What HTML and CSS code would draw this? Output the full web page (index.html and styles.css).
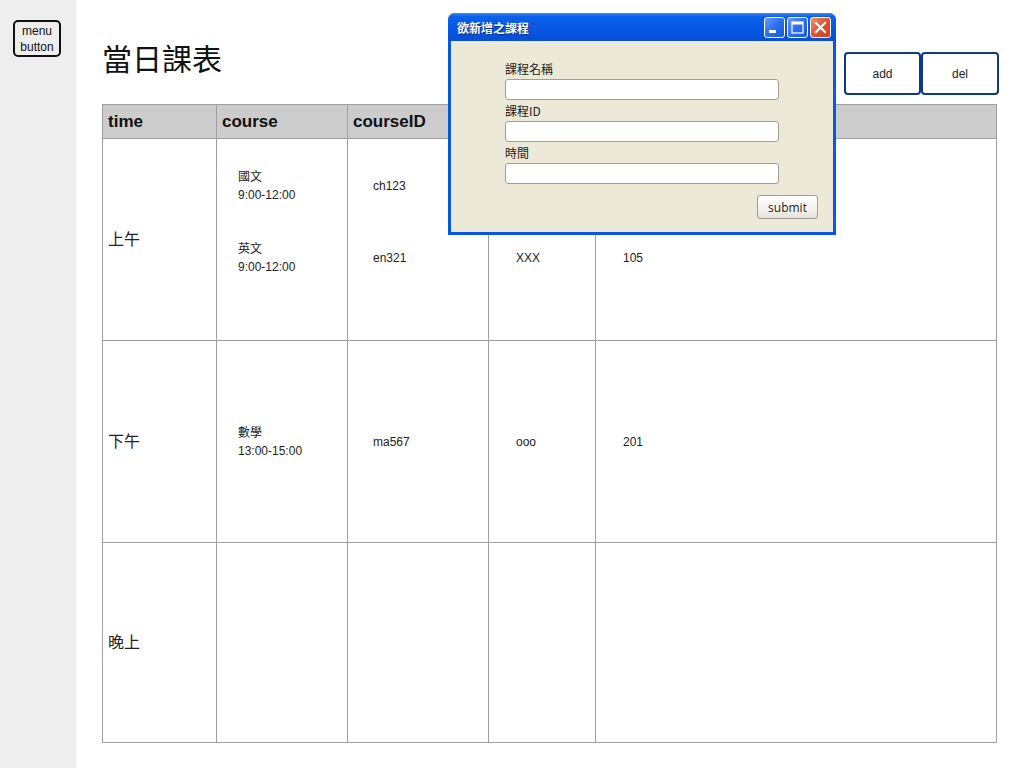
FILE: index.html
```html
<!DOCTYPE html>
<html lang="zh-Hant">
<head>
<meta charset="utf-8">
<title>當日課表</title>
<link rel="stylesheet" href="styles.css">
</head>
<body>
<div class="app">
  <aside class="sidebar">
    <button class="menu-btn">menu<br>button</button>
  </aside>
  <main class="main">
    <div class="topbar">
      <h1 class="title">當日課表</h1>
      <div class="actions">
        <button class="act-btn">add</button>
        <button class="act-btn del">del</button>
      </div>
    </div>
    <table class="schedule">
      <colgroup>
        <col class="c-time"><col class="c-course"><col class="c-id"><col class="c-teacher"><col class="c-room">
      </colgroup>
      <thead>
        <tr><th>time</th><th>course</th><th>courseID</th><th></th><th></th></tr>
      </thead>
      <tbody>
        <tr>
          <td class="time">上午</td>
          <td class="p-course"><div class="entries am">
            <div class="entry two">國文<br>9:00-12:00</div>
            <div class="entry two">英文<br>9:00-12:00</div>
          </div></td>
          <td class="p-id"><div class="entries am">
            <div class="entry">ch123</div>
            <div class="entry">en321</div>
          </div></td>
          <td class="p-other"><div class="entries am">
            <div class="entry"></div>
            <div class="entry">XXX</div>
          </div></td>
          <td class="p-other"><div class="entries am">
            <div class="entry"></div>
            <div class="entry">105</div>
          </div></td>
        </tr>
        <tr>
          <td class="time">下午</td>
          <td class="p-course"><div class="entries">
            <div class="entry two">數學<br>13:00-15:00</div>
          </div></td>
          <td class="p-id"><div class="entries"><div class="entry">ma567</div></div></td>
          <td class="p-other"><div class="entries"><div class="entry">ooo</div></div></td>
          <td class="p-other"><div class="entries"><div class="entry">201</div></div></td>
        </tr>
        <tr class="last">
          <td class="time">晚上</td>
          <td></td><td></td><td></td><td></td>
        </tr>
      </tbody>
    </table>
  </main>
</div>

<div class="dialog">
  <div class="dlg-title">
    <span class="dlg-caption">欲新增之課程</span>
    <div class="dlg-ctrls">
      <span class="ctrl"><svg width="21" height="21" viewBox="0 0 21 21"><rect x="5" y="13" width="7" height="3" fill="#fff"/></svg></span>
      <span class="ctrl"><svg width="21" height="21" viewBox="0 0 21 21"><rect x="5" y="5" width="11" height="11" fill="none" stroke="#fff" stroke-width="1.2"/><rect x="5" y="5" width="11" height="2.5" fill="#fff"/></svg></span>
      <span class="ctrl close"><svg width="21" height="21" viewBox="0 0 21 21"><path d="M6 6 L15 15 M15 6 L6 15" stroke="#fff" stroke-width="2.2" stroke-linecap="square"/></svg></span>
    </div>
  </div>
  <div class="dlg-body">
    <form class="dlg-form">
      <label class="fld"><span class="lbl">課程名稱</span><input class="inp" type="text"></label>
      <label class="fld"><span class="lbl">課程ID</span><input class="inp" type="text"></label>
      <label class="fld"><span class="lbl">時間</span><input class="inp" type="text"></label>
    </form>
    <div class="dlg-foot"><button class="submit" type="button">submit</button></div>
  </div>
</div>
</body>
</html>
```

FILE: styles.css
```css
* { box-sizing: border-box; }
html, body { margin: 0; padding: 0; }
body {
  font-family: "Liberation Sans", Arial, "Noto Sans CJK TC", sans-serif;
  color: #222;
  background: #fff;
}
.app {
  display: flex;
  min-height: 768px;
}
.sidebar {
  width: 76px;
  flex: none;
  background: #eeeeee;
  padding: 20px 0 0 13px;
}
.menu-btn {
  width: 48px;
  height: 37px;
  border: 2px solid #111;
  border-radius: 5px;
  background: transparent;
  font-family: "Liberation Sans", Arial, sans-serif;
  font-size: 12px;
  line-height: 16px;
  color: #111;
  padding: 0;
  display: block;
}
.main {
  flex: 1;
  padding: 36px 28px 0 26px;
}
.topbar {
  display: flex;
  justify-content: space-between;
  align-items: flex-start;
  margin-bottom: 9px;
}
.title {
  margin: 0;
  font-size: 30px;
  line-height: 42px;
  font-weight: normal;
  font-family: "Noto Sans CJK TC", sans-serif;
  color: #111;
}
.actions {
  display: flex;
  margin-top: 16px;
  margin-right: -2px;
}
.act-btn {
  width: 77px;
  height: 43px;
  border: 2px solid #0b3a87;
  border-radius: 4px;
  background: #fff;
  font-family: "Liberation Sans", Arial, sans-serif;
  font-size: 12px;
  color: #222;
  padding: 0;
}
.act-btn.del { width: 78px; }

.schedule {
  width: 894px;
  border-collapse: collapse;
  table-layout: fixed;
  border: 1px solid #a0a0a0;
}
.c-time { width: 114px; }
.c-course { width: 131px; }
.c-id { width: 141px; }
.c-teacher { width: 107px; }
.c-room { width: 401px; }
.schedule th, .schedule td {
  border: 1px solid #a0a0a0;
  padding: 0;
}
.schedule th {
  height: 34px;
  background: #cccccc;
  text-align: left;
  font-size: 17px;
  font-weight: bold;
  padding-left: 5px;
  color: #111;
}
.schedule tbody tr { height: 202px; }
.schedule tbody tr.last { height: 200px; }
.schedule td { vertical-align: middle; font-size: 12px; }
.schedule td.time {
  font-size: 16px;
  padding-left: 5px;
  padding-bottom: 4px;
  font-family: "Noto Sans CJK TC", sans-serif;
  color: #222;
}
.entries {
  display: flex;
  flex-direction: column;
  gap: 36px;
}
.entries.am { padding-bottom: 36px; }
.entry {
  height: 36px;
  line-height: 36px;
}
.entry.two { line-height: 18px; }
.p-course { padding-left: 21px !important; }
.p-id { padding-left: 25px !important; }
.p-other { padding-left: 27px !important; }

/* dialog */
.dialog {
  position: absolute;
  left: 448px;
  top: 13px;
  width: 388px;
  height: 222px;
  background: #0857e2;
  border-radius: 7px 7px 0 0;
  padding: 0 3px 3px 3px;
  display: flex;
  flex-direction: column;
}
.dlg-title {
  height: 28px;
  display: flex;
  align-items: center;
  justify-content: space-between;
  margin: 0 -3px;
  padding: 0 5px 0 9px;
  border-radius: 7px 7px 0 0;
  background: linear-gradient(#3b8cf6 0, #0b62ea 12%, #0858e4 50%, #0650d8 90%, #0a4fd0 100%);
}
.dlg-caption {
  color: #fff;
  font-weight: bold;
  font-size: 12px;
  font-family: "Noto Sans CJK TC", sans-serif;
  text-shadow: 1px 1px 0 #0a2a8a;
}
.dlg-ctrls { display: flex; gap: 2px; }
.ctrl {
  width: 21px;
  height: 21px;
  border: 1px solid #fff;
  border-radius: 3px;
  background: linear-gradient(135deg, #6a9cf5 0%, #2a6ef0 50%, #1c59d6 100%);
  display: block;
  position: relative;
  overflow: hidden;
}
.ctrl svg { position: absolute; left: -1px; top: -1px; }
.ctrl.close {
  background: linear-gradient(135deg, #f0906a 0%, #e0552f 50%, #c8401c 100%);
}
.dlg-body {
  flex: 1;
  background: #ece9d8;
  padding: 17px 15px 0 54px;
  display: flex;
  flex-direction: column;
}
.dlg-form { display: flex; flex-direction: column; }
.fld { display: flex; flex-direction: column; }
.lbl {
  font-size: 12px;
  line-height: 20px;
  height: 21px;
  padding-top: 1px;
  color: #222;
  font-family: "Noto Sans CJK TC", sans-serif;
}
.inp {
  width: 274px;
  height: 21px;
  border: 1px solid #a59d8e;
  border-radius: 3px;
  background: #fff;
  margin: 0;
  padding: 0 3px;
}
.dlg-foot {
  display: flex;
  justify-content: flex-end;
  margin-top: 11px;
}
.submit {
  width: 61px;
  height: 24px;
  border: 1px solid #a39c90;
  border-radius: 3px;
  background: linear-gradient(#ffffff, #f3f2ee 60%, #e4e2da);
  font-family: "Open Sans", "Liberation Sans", sans-serif;
  font-size: 12px;
  color: #222;
  padding: 0;
}
```
